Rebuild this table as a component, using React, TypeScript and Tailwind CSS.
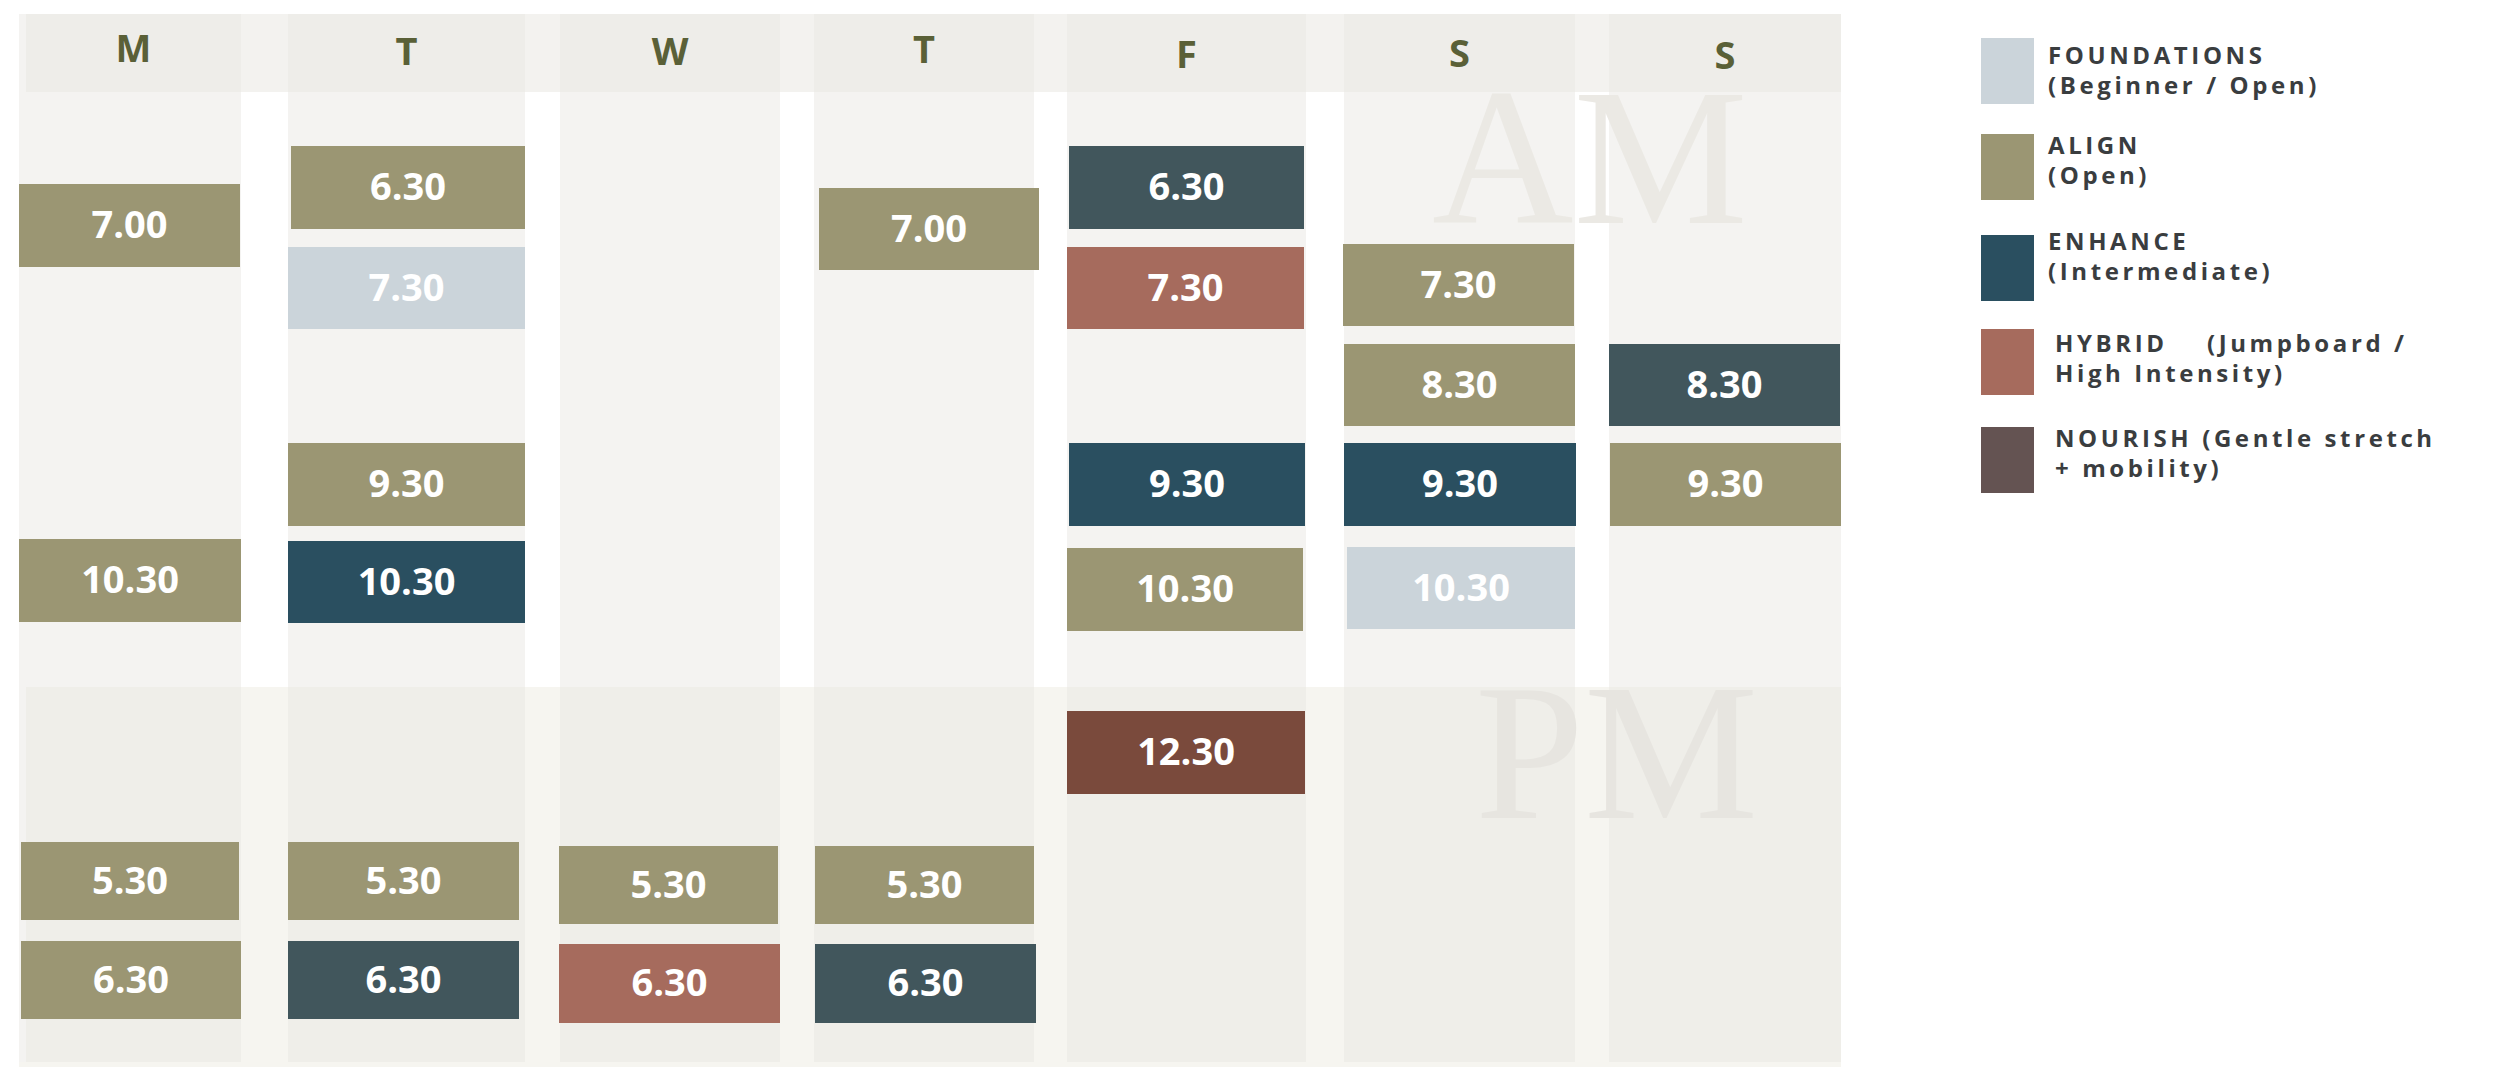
import React from "react";

type Box = { c: string; t: string };
type Col = { cell: string; head: string; letter: string; am: Box[]; pm: Box[] };

const OL = "bg-[#9b9673]";
const FD = "bg-[#cbd4da]";
const EN = "bg-[#2a4f60]";
const SL = "bg-[#41565c]";
const HY = "bg-[#a66b5d]";
const BR = "bg-[#7a4a3c]";

const cols: Col[] = [
  {
    cell: "w-[222px]",
    head: "pt-[14px] border-l-[7px] border-[#f4f3f1]",
    letter: "M",
    am: [
      { c: `mt-[92px] ml-[0px] w-[221px] h-[83px] ${OL}`, t: "7.00" },
      { c: `mt-[272px] ml-[0px] w-[222px] h-[83px] ${OL}`, t: "10.30" },
    ],
    pm: [
      { c: `mt-[155px] ml-[-5px] w-[218px] h-[78px] ${OL}`, t: "5.30" },
      { c: `mt-[21px] ml-[-5px] w-[220px] h-[78px] ${OL}`, t: "6.30" },
    ],
  },
  {
    cell: "ml-[47px] w-[237px]",
    head: "pt-[17px]",
    letter: "T",
    am: [
      { c: `mt-[54px] ml-[3px] w-[234px] h-[83px] ${OL}`, t: "6.30" },
      { c: `mt-[18px] ml-[0px] w-[237px] h-[82px] ${FD}`, t: "7.30" },
      { c: `mt-[114px] ml-[0px] w-[237px] h-[83px] ${OL}`, t: "9.30" },
      { c: `mt-[15px] ml-[0px] w-[237px] h-[82px] ${EN}`, t: "10.30" },
    ],
    pm: [
      { c: `mt-[155px] ml-[0px] w-[231px] h-[78px] ${OL}`, t: "5.30" },
      { c: `mt-[21px] ml-[0px] w-[231px] h-[78px] ${SL}`, t: "6.30" },
    ],
  },
  {
    cell: "ml-[35px] w-[220px]",
    head: "pt-[17px]",
    letter: "W",
    am: [],
    pm: [
      { c: `mt-[159px] ml-[-1px] w-[219px] h-[78px] ${OL}`, t: "5.30" },
      { c: `mt-[20px] ml-[-1px] w-[221px] h-[79px] ${HY}`, t: "6.30" },
    ],
  },
  {
    cell: "ml-[34px] w-[220px]",
    head: "pt-[15px]",
    letter: "T",
    am: [{ c: `mt-[96px] ml-[5px] w-[220px] h-[82px] ${OL}`, t: "7.00" }],
    pm: [
      { c: `mt-[159px] ml-[1px] w-[219px] h-[78px] ${OL}`, t: "5.30" },
      { c: `mt-[20px] ml-[1px] w-[221px] h-[79px] ${SL}`, t: "6.30" },
    ],
  },
  {
    cell: "ml-[33px] w-[239px]",
    head: "pt-[20px]",
    letter: "F",
    am: [
      { c: `mt-[54px] ml-[2px] w-[235px] h-[83px] ${SL}`, t: "6.30" },
      { c: `mt-[18px] ml-[0px] w-[237px] h-[82px] ${HY}`, t: "7.30" },
      { c: `mt-[114px] ml-[2px] w-[236px] h-[83px] ${EN}`, t: "9.30" },
      { c: `mt-[22px] ml-[0px] w-[236px] h-[83px] ${OL}`, t: "10.30" },
    ],
    pm: [{ c: `mt-[24px] ml-[0px] w-[238px] h-[83px] ${BR}`, t: "12.30" }],
  },
  {
    cell: "ml-[38px] w-[231px]",
    head: "pt-[19px]",
    letter: "S",
    am: [
      { c: `mt-[152px] ml-[-1px] w-[231px] h-[82px] ${OL}`, t: "7.30" },
      { c: `mt-[18px] ml-[0px] w-[231px] h-[82px] ${OL}`, t: "8.30" },
      { c: `mt-[17px] ml-[0px] w-[232px] h-[83px] ${EN}`, t: "9.30" },
      { c: `mt-[21px] ml-[3px] w-[228px] h-[82px] ${FD}`, t: "10.30" },
    ],
    pm: [],
  },
  {
    cell: "ml-[34px] w-[232px]",
    head: "pt-[21px]",
    letter: "S",
    am: [
      { c: `mt-[252px] ml-[0px] w-[231px] h-[82px] ${SL}`, t: "8.30" },
      { c: `mt-[17px] ml-[1px] w-[231px] h-[83px] ${OL}`, t: "9.30" },
    ],
    pm: [],
  },
];

function Slot({ b }: { b: Box }) {
  return (
    <div
      className={`${b.c} shrink-0 flex items-center justify-center pb-[5px] text-white font-bold text-[38px] leading-none`}
    >
      {b.t}
    </div>
  );
}

type Leg = { sw: string; gap: string; txt: string; lines: string[] };

const legend: Leg[] = [
  { sw: "bg-[#cbd4da]", gap: "mt-[0px]", txt: "mt-[2px] ml-[14px]", lines: ["FOUNDATIONS", "(Beginner / Open)"] },
  { sw: "bg-[#9b9673]", gap: "mt-[30px]", txt: "mt-[-4px] ml-[14px]", lines: ["ALIGN", "(Open)"] },
  { sw: "bg-[#2a4f60]", gap: "mt-[35px]", txt: "mt-[-9px] ml-[14px]", lines: ["ENHANCE", "(Intermediate)"] },
  { sw: "bg-[#a66b5d]", gap: "mt-[28px]", txt: "mt-[-1px] ml-[21px]", lines: ["HYBRID    (Jumpboard /", "High Intensity)"] },
  { sw: "bg-[#645352]", gap: "mt-[32px]", txt: "mt-[-4px] ml-[21px]", lines: ["NOURISH (Gentle stretch", "+ mobility)"] },
];

export default function App() {
  return (
    <div className="w-[2500px] h-[1080px] bg-white flex items-start font-['Open_Sans',sans-serif]">
      {/* Timetable */}
      <div className="relative mt-[14px] ml-[19px] w-[1822px] flex flex-col">
        {/* header band */}
        <div className="flex h-[78px] bg-[#f3f2ef]">
          {cols.map((c, i) => (
            <div
              key={i}
              className={`${c.cell} ${c.head} shrink-0 h-full bg-[#eeede9] flex justify-center text-[38px] leading-none font-bold text-[#5a6037]`}
            >
              {c.letter}
            </div>
          ))}
        </div>
        {/* AM */}
        <div className="flex h-[595px] bg-white">
          {cols.map((c, i) => (
            <div key={i} className={`${c.cell} shrink-0 h-full bg-[#f4f3f1] flex flex-col`}>
              {c.am.map((b, j) => (
                <Slot key={j} b={b} />
              ))}
            </div>
          ))}
        </div>
        {/* PM band */}
        <div className="flex h-[380px] bg-[#f6f5f0]">
          {cols.map((c, i) => (
            <div
              key={i}
              className={`${c.cell} ${i === 0 ? "border-l-[7px] border-[#f4f3f1]" : ""} shrink-0 h-[375px] bg-[#efeee9] flex flex-col`}
            >
              {c.pm.map((b, j) => (
                <Slot key={j} b={b} />
              ))}
            </div>
          ))}
        </div>
        {/* watermarks */}
        <div className="pointer-events-none absolute left-[1413px] top-[78px] font-['Liberation_Serif',serif] text-[196px] leading-[0.66] text-[#ebe9e4]">
          AM
        </div>
        <div className="pointer-events-none absolute left-[1456px] top-[673px] font-['Liberation_Serif',serif] text-[196px] leading-[0.66] text-[#e7e5e0]">
          PM
        </div>
      </div>

      {/* Legend */}
      <div className="ml-[140px] mt-[38px] flex flex-col">
        {legend.map((l, i) => (
          <div key={i} className={`${l.gap} flex items-start`}>
            <div className={`${l.sw} w-[53px] h-[66px] shrink-0`} />
            <div
              className={`${l.txt} whitespace-pre text-[24px] leading-[30px] font-bold tracking-[0.15em] text-[#3a3d3f]`}
            >
              {l.lines[0]}
              <br />
              {l.lines[1]}
            </div>
          </div>
        ))}
      </div>
    </div>
  );
}
